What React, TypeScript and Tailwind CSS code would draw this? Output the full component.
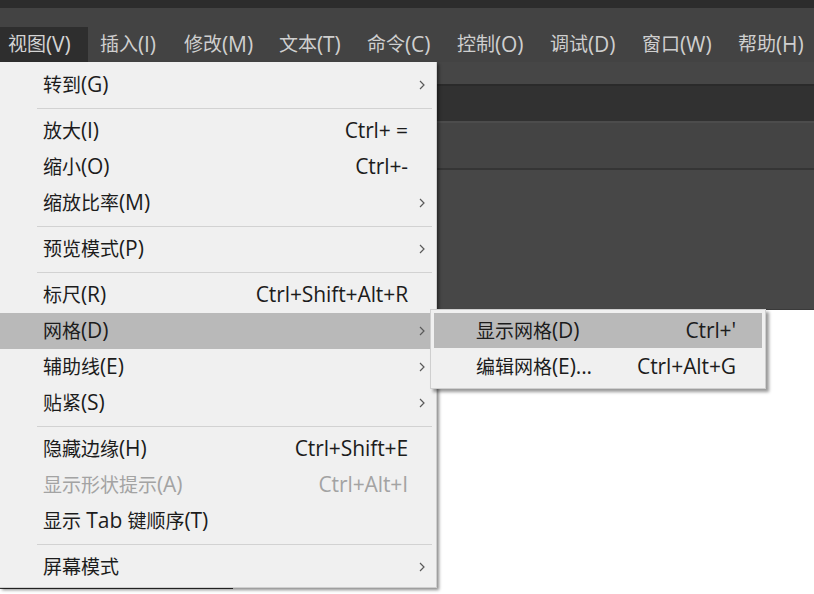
import React from 'react';

type Item =
  | { sep: true }
  | { label: string; shortcut?: string; sub?: boolean; active?: boolean; disabled?: boolean };

const topMenus = ['视图(V)', '插入(I)', '修改(M)', '文本(T)', '命令(C)', '控制(O)', '调试(D)', '窗口(W)', '帮助(H)'];
const topX = [8, 100, 184, 279, 367, 457, 550, 642, 738];

const viewMenu: Item[] = [
  { label: '转到(G)', sub: true },
  { sep: true },
  { label: '放大(I)', shortcut: 'Ctrl+ =' },
  { label: '缩小(O)', shortcut: 'Ctrl+-' },
  { label: '缩放比率(M)', sub: true },
  { sep: true },
  { label: '预览模式(P)', sub: true },
  { sep: true },
  { label: '标尺(R)', shortcut: 'Ctrl+Shift+Alt+R' },
  { label: '网格(D)', sub: true, active: true },
  { label: '辅助线(E)', sub: true },
  { label: '贴紧(S)', sub: true },
  { sep: true },
  { label: '隐藏边缘(H)', shortcut: 'Ctrl+Shift+E' },
  { label: '显示形状提示(A)', shortcut: 'Ctrl+Alt+I', disabled: true },
  { label: '显示 Tab 键顺序(T)' },
  { sep: true },
  { label: '屏幕模式', sub: true },
];

// Chinese runs render a touch smaller than the Latin ones, like the YaHei UI font
const Txt = ({ s }: { s: string }) => (
  <>
    {s.split(/([\u4e00-\u9fff]+)/).filter(Boolean).map((part, i) =>
      /[\u4e00-\u9fff]/.test(part) ? (
        <span key={i} className="text-[19px]">{part}</span>
      ) : (
        <span key={i} className="text-[21px] tracking-[-0.1px]">{part}</span>
      )
    )}
  </>
);

const Chevron = () => (
  <svg width="8" height="12" viewBox="0 0 8 12" className="text-[#5a5a5a]">
    <polyline points="2,2 6,6 2,10" fill="none" stroke="currentColor" strokeWidth="1.2" />
  </svg>
);

const font = { fontFamily: '"Open Sans", "Noto Sans CJK SC", sans-serif' };

const App: React.FC = () => {
  return (
    <div className="relative w-[814px] h-[594px] overflow-hidden bg-white" style={font}>
      {/* title strip */}
      <div className="h-[8px] bg-[#2c2c2c]" />
      {/* menu bar */}
      <div className="relative h-[54px] bg-[#434343]">
        {topMenus.map((m, i) =>
          i === 0 ? (
            <div key={m} className="absolute left-0 top-[19px] h-[35px] w-[88px] bg-[#2e2e2e] flex items-center pl-[8px] text-[#d4d4d4]">
              <Txt s={m} />
            </div>
          ) : (
            <div key={m} className="absolute top-[19px] h-[35px] flex items-center text-[#cfcfcf]" style={{ left: topX[i] }}>
              <Txt s={m} />
            </div>
          )
        )}
      </div>
      {/* workspace bands */}
      <div className="h-[24px] bg-[#464646] border-b-2 border-[#2a2a2a]" />
      <div className="h-[37px] bg-[#313131] border-b-2 border-[#4c4c4c]" />
      <div className="h-[47px] bg-[#444444] border-b-2 border-[#353535]" />
      <div className="h-[140px] bg-[#474747] border-b border-[#3a3a3a]" />
      <div className="h-[271px] bg-white" />
      <div className="h-[8px] w-[233px] bg-[#363636]" />

      {/* View dropdown */}
      <div className="absolute left-0 top-[62px] w-[437px] bg-[#f0f0f0] border-r border-b border-[#cfcfcf] pt-[5px] pb-[2px] shadow-[2px_2px_3px_rgba(0,0,0,0.45)]">
        {viewMenu.map((it, i) =>
          'sep' in it ? (
            <div key={i} className="h-[10px] flex items-center pl-[37px] pr-[4px]">
              <div className="h-px w-full bg-[#d2d2d2]" />
            </div>
          ) : (
            <div
              key={i}
              className={`h-[36px] flex items-center pl-[43px] mr-[6px] ${
                it.active ? 'bg-[#b9b9b9]' : ''
              } ${it.disabled ? 'text-[#a3a3a3]' : 'text-[#1c1c1c]'}`}
            >
              <span className="flex-1 whitespace-nowrap">
                <Txt s={it.label} />
              </span>
              {it.shortcut && (
                <span className="pr-[22px] whitespace-nowrap">
                  <Txt s={it.shortcut} />
                </span>
              )}
              {it.sub && (
                <span className="w-[28px] flex justify-center mr-[-6px]">
                  <Chevron />
                </span>
              )}
            </div>
          )
        )}
      </div>

      {/* Grid submenu */}
      <div className="absolute left-[430px] top-[309px] w-[336px] bg-[#f0f0f0] border border-[#cfcfcf] p-[3px] shadow-[3px_3px_3px_rgba(0,0,0,0.4)]">
        <div className="h-[35px] flex items-center bg-[#b9b9b9] pl-[42px] pr-[26px] text-[#1c1c1c]">
          <span className="flex-1"><Txt s="显示网格(D)" /></span>
          <span><Txt s="Ctrl+'" /></span>
        </div>
        <div className="h-[37px] flex items-center pl-[42px] pr-[26px] text-[#1c1c1c]">
          <span className="flex-1"><Txt s="编辑网格(E)..." /></span>
          <span><Txt s="Ctrl+Alt+G" /></span>
        </div>
      </div>
    </div>
  );
};

export default App;
